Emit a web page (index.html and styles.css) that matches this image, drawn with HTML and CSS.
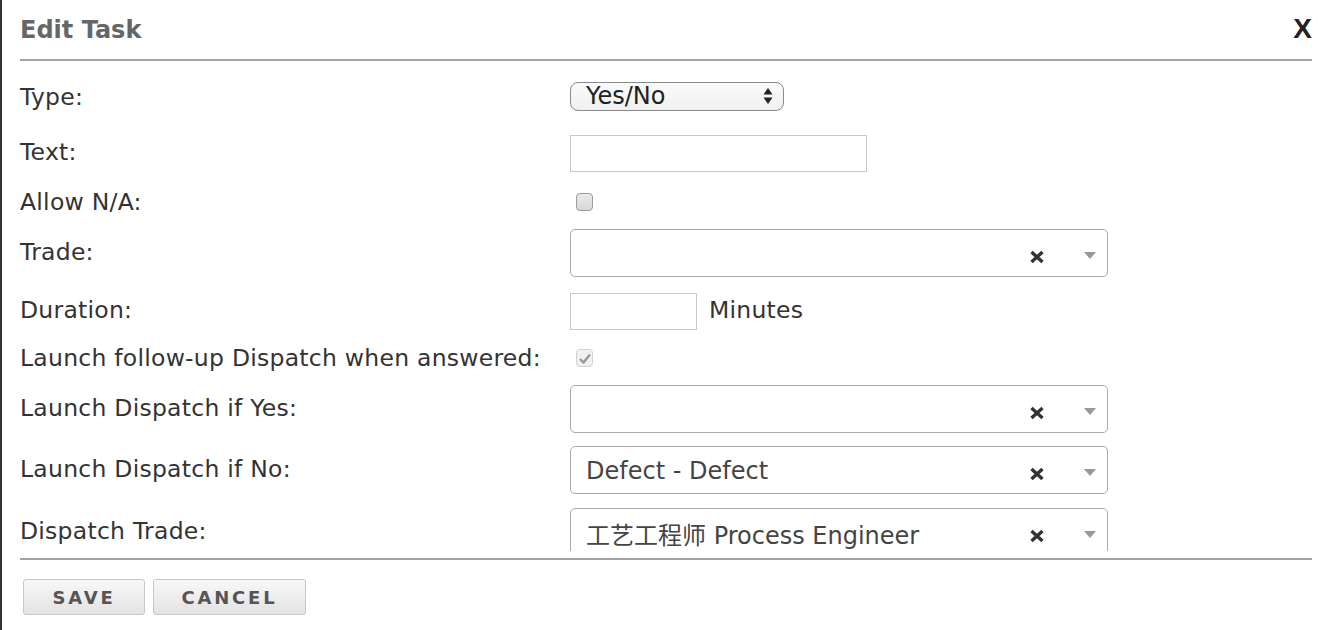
FILE: index.html
```html
<!DOCTYPE html>
<html lang="en">
<head>
    <meta charset="UTF-8">
    <title>Edit Task</title>
    <link rel="stylesheet" href="styles.css">
</head>
<body>
    <div class="modal">
        <div class="modal-header">
            <h2>Edit Task</h2>
            <span class="close">X</span>
        </div>

        <div class="modal-body">
            <div class="row row-type">
                <label>Type:</label>
                <div class="field">
                    <div class="picker">
                        <span>Yes/No</span>
                        <svg class="updown" width="10" height="18" viewBox="0 0 10 18"><path d="M5 1 L9.5 7.5 H0.5 Z M5 17 L9.5 10.5 H0.5 Z" fill="#222"/></svg>
                    </div>
                </div>
            </div>

            <div class="row">
                <label>Text:</label>
                <div class="field"><div class="text-input wide"></div></div>
            </div>

            <div class="row row-short">
                <label>Allow N/A:</label>
                <div class="field"><span class="check"></span></div>
            </div>

            <div class="row">
                <label>Trade:</label>
                <div class="field">
                    <div class="combo">
                        <span class="combo-value"></span>
                        <svg class="combo-clear" width="16" height="14" viewBox="0 0 16 14"><path d="M2.5 2 L13.5 12 M13.5 2 L2.5 12" stroke="#333" stroke-width="3.4"/></svg>
                        <span class="combo-arrow"></span>
                    </div>
                </div>
            </div>

            <div class="row row-duration">
                <label>Duration:</label>
                <div class="field">
                    <div class="text-input small"></div>
                    <span class="unit">Minutes</span>
                </div>
            </div>

            <div class="row row-short">
                <label>Launch follow-up Dispatch when answered:</label>
                <div class="field">
                    <span class="check checked">
                        <svg width="12" height="11" viewBox="0 0 12 11"><path d="M1 6 L4.5 9.5 L11 1.5" stroke="#999" stroke-width="2.4" fill="none"/></svg>
                    </span>
                </div>
            </div>

            <div class="row">
                <label>Launch Dispatch if Yes:</label>
                <div class="field">
                    <div class="combo">
                        <span class="combo-value"></span>
                        <svg class="combo-clear" width="16" height="14" viewBox="0 0 16 14"><path d="M2.5 2 L13.5 12 M13.5 2 L2.5 12" stroke="#333" stroke-width="3.4"/></svg>
                        <span class="combo-arrow"></span>
                    </div>
                </div>
            </div>

            <div class="row row-tall">
                <label>Launch Dispatch if No:</label>
                <div class="field">
                    <div class="combo">
                        <span class="combo-value">Defect - Defect</span>
                        <svg class="combo-clear" width="16" height="14" viewBox="0 0 16 14"><path d="M2.5 2 L13.5 12 M13.5 2 L2.5 12" stroke="#333" stroke-width="3.4"/></svg>
                        <span class="combo-arrow"></span>
                    </div>
                </div>
            </div>

            <div class="row row-tall">
                <label>Dispatch Trade:</label>
                <div class="field">
                    <div class="combo">
                        <span class="combo-value">工艺工程师 Process Engineer</span>
                        <svg class="combo-clear" width="16" height="14" viewBox="0 0 16 14"><path d="M2.5 2 L13.5 12 M13.5 2 L2.5 12" stroke="#333" stroke-width="3.4"/></svg>
                        <span class="combo-arrow"></span>
                    </div>
                </div>
            </div>
        </div>

        <div class="modal-footer">
            <button class="btn">Save</button>
            <button class="btn btn-cancel">Cancel</button>
        </div>
    </div>
</body>
</html>
```

FILE: styles.css
```css
body {
    margin: 0;
    background: #fff;
    font-family: 'DejaVu Sans', 'Noto Sans CJK SC', sans-serif;
    color: #333;
}

.modal {
    height: 630px;
    border-left: 2px solid #333;
    box-sizing: border-box;
    overflow: hidden;
}

.modal-header {
    height: 59px;
    margin: 0 16px 0 18px;
    border-bottom: 2px solid #a3a3a3;
    display: flex;
    align-items: center;
    justify-content: space-between;
}

.modal-header h2 {
    margin: 0;
    font-size: 24px;
    font-weight: bold;
    color: #666;
}

.close {
    font-family: 'Liberation Sans', sans-serif;
    font-weight: bold;
    font-size: 28px;
    color: #222;
    margin-top: -2px;
}

.modal-body {
    height: 490px;
    padding: 12px 0 0 18px;
    box-sizing: border-box;
    overflow: hidden;
}

.row {
    display: grid;
    grid-template-columns: 550px 1fr;
    align-items: center;
    height: 60px;
}

.row-type { height: 50px; }
.row-short { height: 40px; }
.row-duration { height: 56px; }
.row-tall { height: 62px; }

.row label {
    font-size: 23.5px;
    letter-spacing: 0.25px;
    margin-top: -2px;
}

.field {
    display: flex;
    align-items: center;
}

.picker {
    width: 214px;
    height: 29px;
    margin-top: -4px;
    box-sizing: border-box;
    border: 1px solid #8a8a8a;
    border-radius: 8px;
    background: linear-gradient(#fbfbfb, #f0f0f0);
    display: flex;
    align-items: center;
    justify-content: space-between;
    padding: 0 10px 0 15px;
    font-size: 24px;
    color: #222;
}

.text-input {
    height: 37px;
    box-sizing: border-box;
    border: 1px solid #c8c8c8;
    background: #fff;
}

.text-input.wide { width: 297px; }
.text-input.small { width: 127px; }

.unit {
    font-size: 23.5px;
    letter-spacing: 0.25px;
    margin-left: 12px;
    margin-top: -2px;
}

.check {
    width: 17px;
    height: 18px;
    margin-left: 6px;
    margin-top: -2px;
    box-sizing: border-box;
    border: 1px solid #9a9a9a;
    border-radius: 4px;
    background: linear-gradient(#e9e9e9, #d8d8d8);
    display: flex;
    align-items: center;
    justify-content: center;
}

.check.checked {
    border-color: #d2d2d2;
    background: #f1f1f1;
}

.combo {
    width: 538px;
    height: 48px;
    box-sizing: border-box;
    border: 1px solid #aaa;
    border-radius: 5px;
    background: #fff;
    display: flex;
    align-items: center;
    padding: 0 11px 0 15px;
}

.combo-value {
    flex: 1;
    font-size: 24px;
    color: #444;
    margin-top: 2px;
}

.combo-clear {
    margin: 8px 39px 0 0;
}

.combo-arrow {
    width: 0;
    height: 0;
    border-left: 6px solid transparent;
    border-right: 6px solid transparent;
    border-top: 7px solid #999;
    margin-top: 4px;
}

.modal-footer {
    margin: 7px 16px 0 18px;
    border-top: 2px solid #a3a3a3;
    padding: 19px 0 0 3px;
    display: flex;
    gap: 8px;
}

.btn {
    width: 122px;
    height: 36px;
    border: 1px solid #c8c8c8;
    border-radius: 3px;
    background: linear-gradient(#f8f8f8, #e3e3e3);
    font-family: 'DejaVu Sans', sans-serif;
    font-weight: bold;
    font-size: 18px;
    letter-spacing: 2.8px;
    text-transform: uppercase;
    color: #555;
    padding: 0;
}

.btn-cancel {
    width: 153px;
}
```
